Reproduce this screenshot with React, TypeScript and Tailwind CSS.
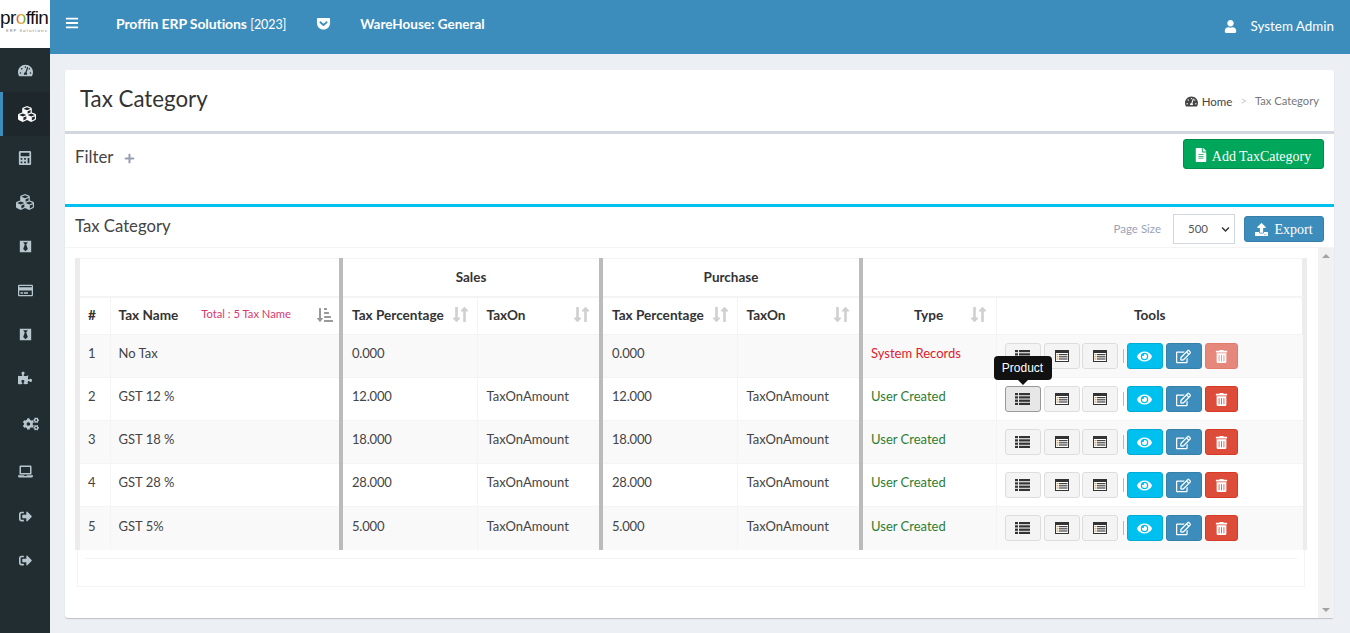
import {
  FaBars,
  FaBlackTie,
  FaCalculator,
  FaChevronDown,
  FaCogs,
  FaCubes,
  FaEye,
  FaFileAlt,
  FaGetPocket,
  FaLaptop,
  FaLongArrowAltDown,
  FaLongArrowAltUp,
  FaPlus,
  FaPuzzlePiece,
  FaRegCreditCard,
  FaRegEdit,
  FaSignOutAlt,
  FaSortAmountDownAlt,
  FaTachometerAlt,
  FaTrashAlt,
  FaUpload,
  FaUser,
} from "react-icons/fa";

const sideItems = [
  { icon: FaTachometerAlt, size: 15, cls: "h-[44px]" },
  { icon: FaCubes, size: 18, cls: "h-[44px] border-l-[3px] border-[#3c8dbc] bg-[#1e282c] text-white" },
  { icon: FaCalculator, size: 14, cls: "h-[44px]" },
  { icon: FaCubes, size: 18, cls: "h-[44px]" },
  { icon: FaBlackTie, size: 13, cls: "h-[44px]" },
  { icon: FaRegCreditCard, size: 15, cls: "h-[44px]" },
  { icon: FaBlackTie, size: 13, cls: "h-[44px]" },
  { icon: FaPuzzlePiece, size: 14, cls: "h-[44px]" },
  { icon: FaCogs, size: 16, cls: "h-[48px] pl-[12px]" },
  { icon: FaLaptop, size: 15, cls: "h-[46px]" },
  { icon: FaSignOutAlt, size: 13, cls: "h-[44px]" },
  { icon: FaSignOutAlt, size: 13, cls: "h-[44px]" },
];

const rows = [
  { id: 1, name: "No Tax", pct: "0.000", on: "", type: "System Records", locked: true },
  { id: 2, name: "GST 12 %", pct: "12.000", on: "TaxOnAmount", type: "User Created" },
  { id: 3, name: "GST 18 %", pct: "18.000", on: "TaxOnAmount", type: "User Created" },
  { id: 4, name: "GST 28 %", pct: "28.000", on: "TaxOnAmount", type: "User Created" },
  { id: 5, name: "GST 5%", pct: "5.000", on: "TaxOnAmount", type: "User Created" },
];

// fa-list from the old icon font: square bullets, not round
function ListIcon() {
  return (
    <svg width="15" height="12" viewBox="0 0 15 12" fill="#333">
      <rect x="0" y="0" width="3" height="2.2" />
      <rect x="4" y="0" width="11" height="2.2" />
      <rect x="0" y="3.3" width="3" height="2.2" />
      <rect x="4" y="3.3" width="11" height="2.2" />
      <rect x="0" y="6.6" width="3" height="2.2" />
      <rect x="4" y="6.6" width="11" height="2.2" />
      <rect x="0" y="9.8" width="3" height="2.2" />
      <rect x="4" y="9.8" width="11" height="2.2" />
    </svg>
  );
}

function ListAltIcon() {
  return (
    <svg width="14" height="12" viewBox="0 0 14 12">
      <rect x="0.5" y="0.5" width="13" height="11" fill="#fff" stroke="#333" />
      <rect x="0" y="0" width="14" height="3" fill="#333" />
      <rect x="1.5" y="4" width="2" height="1.2" fill="#c9a05c" />
      <rect x="4" y="4" width="8.5" height="1.2" fill="#444" />
      <rect x="1.5" y="6.2" width="2" height="1.2" fill="#c9a05c" />
      <rect x="4" y="6.2" width="8.5" height="1.2" fill="#444" />
      <rect x="1.5" y="8.4" width="2" height="1.2" fill="#c9a05c" />
      <rect x="4" y="8.4" width="8.5" height="1.2" fill="#444" />
    </svg>
  );
}

function SortIcon() {
  return (
    <span className="flex items-center text-[#d0d0d0] text-[17px] -space-x-[9px]">
      <FaLongArrowAltDown />
      <FaLongArrowAltUp />
    </span>
  );
}

function HeadCell({ label }: { label: string }) {
  return (
    <div className="flex items-center justify-between">
      <span>{label}</span>
      <SortIcon />
    </div>
  );
}

function Tools({ active, locked }: { active?: boolean; locked?: boolean }) {
  const plain = "h-[26px] rounded-[3px] border border-[#ddd] bg-[#f4f4f4] flex items-center justify-center text-[#333]";
  return (
    <div className="flex items-center">
      <button className={`${plain} w-[36px] ${active ? "!border-[#999] !bg-[#e7e7e7]" : ""}`}>
        <ListIcon />
      </button>
      <button className={`${plain} w-[36px] ml-[3px]`}>
        <ListAltIcon />
      </button>
      <button className={`${plain} w-[36px] ml-[2px]`}>
        <ListAltIcon />
      </button>
      <span className="ml-[5px] h-[14px] w-px bg-[#d9b382]" />
      <button className="ml-[3px] h-[26px] w-[36px] rounded-[3px] border border-[#00acd6] bg-[#00c0ef] flex items-center justify-center text-white">
        <FaEye className="text-[15px]" />
      </button>
      <button className="ml-[3px] h-[26px] w-[36px] rounded-[3px] border border-[#367fa9] bg-[#3c8dbc] flex items-center justify-center text-white">
        <FaRegEdit className="text-[15px]" />
      </button>
      <button
        className={`ml-[3px] h-[26px] w-[33px] rounded-[3px] border border-[#d73925] bg-[#dd4b39] flex items-center justify-center text-white ${locked ? "opacity-65" : ""}`}
      >
        <FaTrashAlt className="text-[13px]" />
      </button>
    </div>
  );
}

export default function App() {
  return (
    <div className="flex h-[633px] w-[1350px] overflow-hidden bg-[#ecf0f5] font-['Lato',sans-serif] text-[13px] text-[#444]">
      <aside className="w-[50px] shrink-0 bg-[#222d32]">
        <div className="h-[48px] overflow-hidden bg-white pt-[8px]">
          <div className="font-['Liberation_Sans',sans-serif] text-[19px] leading-[20px] tracking-[-0.6px] text-[#111] whitespace-nowrap">
            pr<span className="bg-linear-to-r from-[#e2483a] via-[#e8b02a] to-[#3fa34d] bg-clip-text text-transparent">o</span>ffin
          </div>
          <div className="pl-[6px] text-[4.5px] leading-[5px] tracking-[1.1px] text-[#888] whitespace-nowrap">ERP Solutions</div>
        </div>
        {sideItems.map((item, i) => {
          const Icon = item.icon;
          return (
            <div key={i} className={`flex items-center justify-center text-[#b8c7ce] ${item.cls}`}>
              <Icon size={item.size} />
            </div>
          );
        })}
      </aside>

      <div className="flex min-w-0 flex-1 flex-col">
        <header className="flex h-[54px] shrink-0 items-start bg-[#3c8dbc] text-white">
          <FaBars className="ml-[15px] mt-[16px] text-[14px]" />
          <div className="ml-[37px] mt-[14px] text-[14px] font-bold leading-[20px] tracking-[-0.1px]">
            Proffin ERP Solutions <span className="text-[12.5px] font-normal">[2023]</span>
          </div>
          <FaGetPocket className="ml-[30px] mt-[16px] text-[15px]" />
          <div className="ml-[29px] mt-[14px] text-[13.5px] font-bold leading-[20px]">WareHouse: General</div>
          <div className="ml-auto mr-[16px] mt-[16px] flex items-center text-[13.4px] leading-[20px]">
            <FaUser className="mr-[14px] text-[13px]" />
            System Admin
          </div>
        </header>

        <main className="flex min-h-0 flex-1 pl-[15px] pr-[16px] pt-[16px] pb-[15px]">
          <div className="flex min-w-0 flex-1 flex-col rounded-[3px] bg-white shadow-[0_1px_1px_rgba(0,0,0,0.2)]">
            <div className="flex h-[61px] shrink-0 items-center justify-between pl-[15px] pr-[15px]">
              <h1 className="pb-[4px] text-[22.3px] leading-[30px] text-[#333]">Tax Category</h1>
              <div className="flex items-center pt-[2px] text-[11.2px]">
                <FaTachometerAlt className="mr-[4px] text-[13px] text-[#444]" />
                <span className="text-[11.5px] text-[#444]">Home</span>
                <span className="mx-[8px] text-[#ccc]">&gt;</span>
                <span className="text-[#777]">Tax Category</span>
              </div>
            </div>

            <div className="flex h-[73px] shrink-0 items-start justify-between border-t-[3px] border-[#d2d6de] pl-[10px] pr-[10px]">
              <div className="mt-[13px] flex items-center text-[16.8px] leading-[20px] text-[#444]">
                Filter
                <FaPlus className="ml-[11px] mt-[2px] text-[11px] text-[#97a0b3]" />
              </div>
              <button className="mt-[5px] flex h-[30px] w-[141px] items-center justify-center rounded-[3px] border border-[#008d4c] bg-[#00a65a] pt-[4px] pr-[2px] font-['Liberation_Serif',serif] text-[14px] text-white">
                <FaFileAlt className="mr-[4px] mb-[3px] text-[14px]" />
                Add TaxCategory
              </button>
            </div>

            <div className="flex h-[44px] shrink-0 items-center justify-between border-t-[3px] border-[#00c0ef] border-b border-b-[#f4f4f4] pl-[10px] pr-[10px]">
              <div className="pb-[1px] text-[16.7px] text-[#444]">Tax Category</div>
              <div className="flex items-center pt-[4px]">
                <span className="mr-[12px] text-[11.5px] text-[#9aa3b8]">Page Size</span>
                <div className="flex h-[30px] w-[62px] items-center justify-between border border-[#d2d6de] pl-[14px] pr-[4px] text-[11.5px] text-[#555]">
                  500
                  <FaChevronDown className="text-[9px] text-[#333]" />
                </div>
                <button className="ml-[9px] flex h-[26px] w-[80px] items-center justify-center rounded-[3px] border border-[#367fa9] bg-[#3c8dbc] pt-[1px] font-['Liberation_Serif',serif] text-[14px] text-white">
                  <FaUpload className="mr-[6px] text-[13px]" />
                  Export
                </button>
              </div>
            </div>

            <div className="flex min-h-0 flex-1">
              <div className="min-w-0 flex-1 pl-[10px] pt-[10px]">
                <div className="w-[1232px] border-x-[5px] border-[#ececec]">
                  <table className="w-[1223px] table-fixed border-collapse whitespace-nowrap">
                    <colgroup>
                      <col className="w-[30px]" />
                      <col className="w-[231px]" />
                      <col className="w-[136px]" />
                      <col className="w-[124px]" />
                      <col className="w-[136px]" />
                      <col className="w-[124px]" />
                      <col className="w-[135px]" />
                      <col className="w-[307px]" />
                    </colgroup>
                    <thead className="text-[#333]">
                      <tr className="h-[38px] border-t border-[#f4f4f4] text-[13.5px]">
                        <th colSpan={2} />
                        <th colSpan={2} className="border-l-[4px] border-[#bbb] font-bold">
                          Sales
                        </th>
                        <th colSpan={2} className="border-l-[4px] border-[#bbb] font-bold">
                          Purchase
                        </th>
                        <th colSpan={2} className="border-l-[4px] border-[#bbb]" />
                      </tr>
                      <tr className="h-[38px] border-t-2 border-[#f4f4f4] text-left text-[13.6px]">
                        <th className="pb-[2px] pl-[8px] font-bold">#</th>
                        <th className="border-l border-[#f4f4f4] pb-[2px] pl-[8px] pr-[6px] font-bold">
                          <div className="flex items-center justify-between">
                            <span>Tax Name</span>
                            <span className="ml-[23px] mr-auto text-[11.2px] font-normal text-[#d9396f]">Total : 5 Tax Name</span>
                            <FaSortAmountDownAlt className="text-[16px] text-[#999]" />
                          </div>
                        </th>
                        <th className="border-l-[4px] border-[#bbb] pb-[2px] pl-[9px] pr-[4px] font-bold">
                          <HeadCell label="Tax Percentage" />
                        </th>
                        <th className="border-l border-[#f4f4f4] pb-[2px] pl-[9px] pr-[5px] font-bold">
                          <HeadCell label="TaxOn" />
                        </th>
                        <th className="border-l-[4px] border-[#bbb] pb-[2px] pl-[9px] pr-[4px] font-bold">
                          <HeadCell label="Tax Percentage" />
                        </th>
                        <th className="border-l border-[#f4f4f4] pb-[2px] pl-[9px] pr-[5px] font-bold">
                          <HeadCell label="TaxOn" />
                        </th>
                        <th className="border-l-[4px] border-[#bbb] pb-[2px] pr-[5px] font-bold">
                          <div className="flex items-center justify-between pl-[51px]">
                            <span>Type</span>
                            <SortIcon />
                          </div>
                        </th>
                        <th className="border-l border-[#f4f4f4] pb-[2px] text-center font-bold">Tools</th>
                      </tr>
                    </thead>
                    <tbody>
                      {rows.map((row) => (
                        <tr key={row.id} className={`h-[43px] border-t border-[#f4f4f4] ${row.id % 2 === 1 ? "bg-[#f9f9f9]" : "bg-white"}`}>
                          <td className="pb-[4px] pl-[8px]">{row.id}</td>
                          <td className="border-l border-[#f4f4f4] pb-[4px] pl-[8px]">{row.name}</td>
                          <td className="border-l-[4px] border-[#bbb] pb-[4px] pl-[9px] tracking-[-0.2px]">{row.pct}</td>
                          <td className="border-l border-[#f4f4f4] pb-[4px] pl-[9px]">{row.on}</td>
                          <td className="border-l-[4px] border-[#bbb] pb-[4px] pl-[9px] tracking-[-0.2px]">{row.pct}</td>
                          <td className="border-l border-[#f4f4f4] pb-[4px] pl-[9px]">{row.on}</td>
                          <td className={`border-l-[4px] border-[#bbb] pb-[4px] pl-[8px] ${row.locked ? "text-[#e0202a]" : "text-[#2e7d32]"}`}>{row.type}</td>
                          <td className="relative border-l border-[#f4f4f4] pl-[8px]">
                            <Tools active={row.id === 2} locked={row.locked} />
                            {row.id === 2 && (
                              <div className="absolute left-[-3px] top-[-22px] flex h-[24px] w-[58px] items-center justify-center rounded-[4px] bg-[#111] font-['Liberation_Sans',sans-serif] text-[12px] text-white">
                                Product
                                <span className="absolute bottom-[-5px] left-[24px] h-0 w-0 border-x-[5px] border-t-[5px] border-x-transparent border-t-[#111]" />
                              </div>
                            )}
                          </td>
                        </tr>
                      ))}
                    </tbody>
                  </table>
                </div>
                <div className="ml-[2px] h-[37px] w-[1228px] border border-t-0 border-[#f4f4f4] pt-[8px] pl-[7px] pr-[7px]">
                  <div className="border-t border-[#f4f4f4]" />
                </div>
              </div>
              <div className="flex w-[16px] shrink-0 flex-col items-center justify-between bg-[#f1f1f1] py-[6px]">
                <span className="h-0 w-0 border-x-[4px] border-b-[4px] border-x-transparent border-b-[#a3a3a3]" />
                <span className="h-0 w-0 border-x-[4px] border-t-[4px] border-x-transparent border-t-[#a3a3a3]" />
              </div>
            </div>
          </div>
        </main>
      </div>
    </div>
  );
}
